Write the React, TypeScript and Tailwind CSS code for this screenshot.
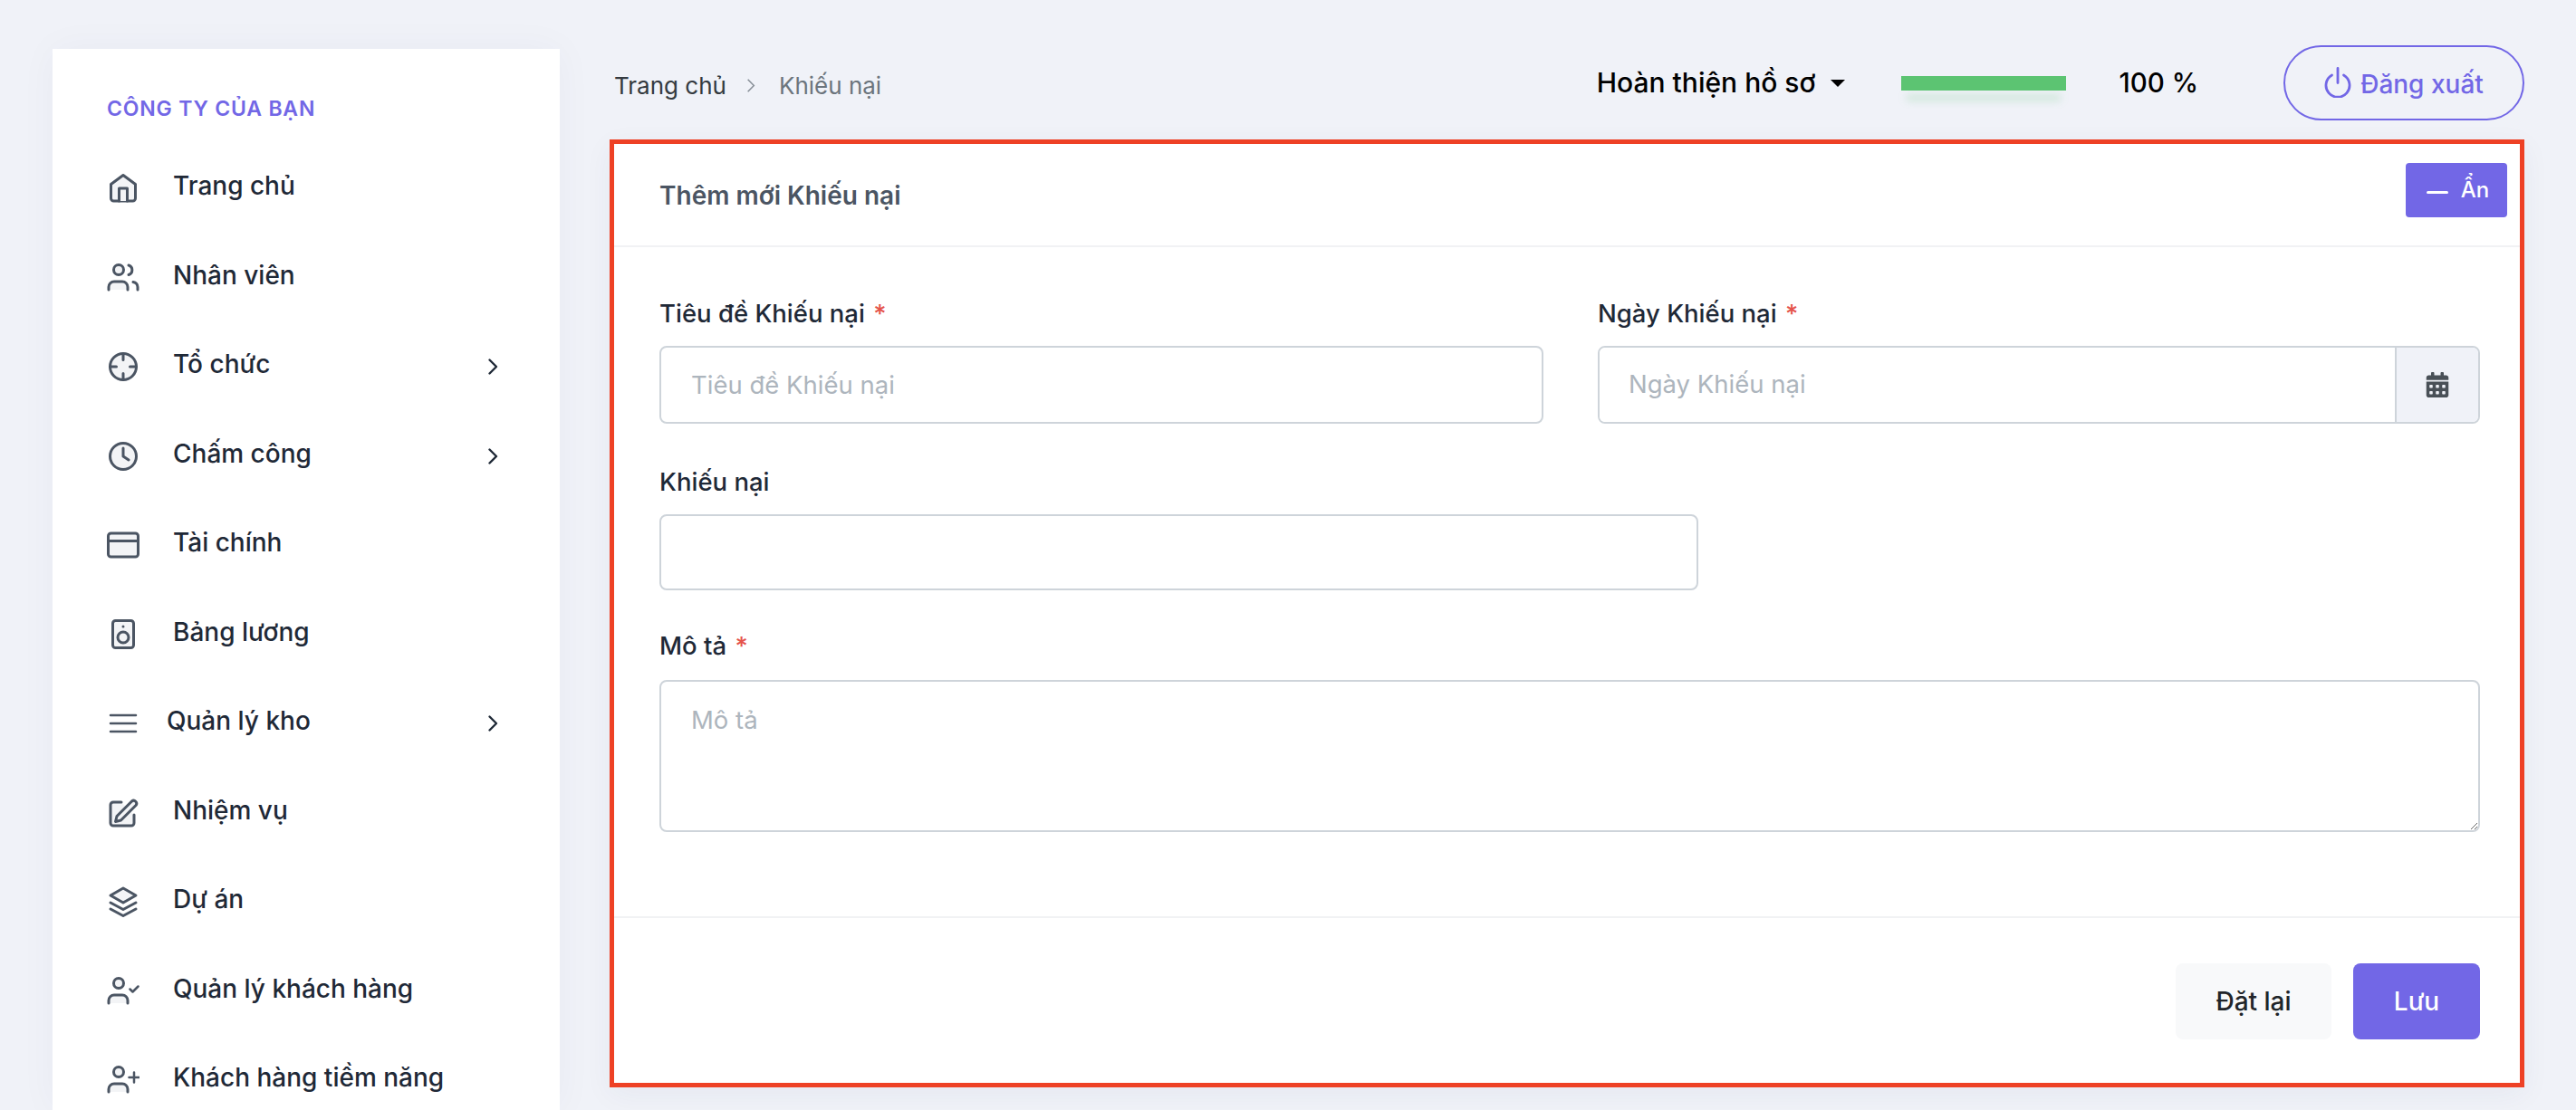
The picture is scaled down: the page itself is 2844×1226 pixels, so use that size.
import type { ReactNode } from 'react'
import { FaCalendarAlt } from 'react-icons/fa'

// Shared wrapper for the sidebar icons (drawn on a 36px grid)
function Ico({ children }: { children: ReactNode }) {
  return (
    <svg
      viewBox="0 0 36 36"
      className="w-[36px] h-[36px] shrink-0 mt-[6px] fill-[#f3f4f6] stroke-[#4b5563]"
      strokeWidth="3"
      strokeLinecap="round"
      strokeLinejoin="round"
    >
      {children}
    </svg>
  )
}

const UserBody = () => (
  <>
    <circle cx="13" cy="9" r="5.5" />
    <path d="M2 31v-3a6 6 0 0 1 6-6h9a6 6 0 0 1 6 6v3" />
  </>
)

const icons = {
  home: (
    <Ico>
      <path d="M18 3.5 31.5 13.5V29a3 3 0 0 1-3 3H7.5a3 3 0 0 1-3-3V13.5Z" />
      <path d="M13.5 32V18h9v14" />
    </Ico>
  ),
  users: (
    <Ico>
      <UserBody />
      <path d="M24 4a5.5 5.5 0 0 1 0 10.5" fill="none" />
      <path d="M29 22.5a6 6 0 0 1 5 5.5v3" fill="none" />
    </Ico>
  ),
  target: (
    <Ico>
      <circle cx="18" cy="18" r="14.5" />
      <path d="M18 3.5v7M18 25.5v7M3.5 18h7M25.5 18h7" />
    </Ico>
  ),
  clock: (
    <Ico>
      <circle cx="18" cy="18" r="14.5" />
      <path d="M18 9v9l6 4" fill="none" />
    </Ico>
  ),
  card: (
    <Ico>
      <rect x="1.5" y="5" width="33" height="26" rx="3" />
      <path d="M1.5 13.5h33" />
    </Ico>
  ),
  speaker: (
    <Ico>
      <rect x="6.5" y="2.5" width="23" height="30" rx="3" />
      <circle cx="18" cy="21" r="6" />
      <path d="M18 9h.01" />
    </Ico>
  ),
  menu: (
    <Ico>
      <path d="M4 9h28M4 18h28M4 27h28" strokeWidth="2.5" />
    </Ico>
  ),
  edit: (
    <Ico>
      <path d="M16 6H7a3 3 0 0 0-3 3v20a3 3 0 0 0 3 3h20a3 3 0 0 0 3-3v-9" />
      <path d="M27.5 5a3.2 3.2 0 0 1 4.5 4.5L15.5 26l-6 1.5 1.5-6Z" />
    </Ico>
  ),
  layers: (
    <Ico>
      <path d="M18 3 32 11 18 19 4 11Z" />
      <path d="M4 19l14 7.5L32 19M4 26l14 7.5L32 26" fill="none" />
    </Ico>
  ),
  userCheck: (
    <Ico>
      <UserBody />
      <path d="M25.5 15.5l3 3 6-6" fill="none" strokeWidth="2.5" />
    </Ico>
  ),
  userPlus: (
    <Ico>
      <UserBody />
      <path d="M30 9.5v11M24.5 15h11" fill="none" strokeWidth="2.5" />
    </Ico>
  ),
}

const menu = [
  { label: 'Trang chủ', icon: icons.home },
  { label: 'Nhân viên', icon: icons.users },
  { label: 'Tổ chức', icon: icons.target, sub: true },
  { label: 'Chấm công', icon: icons.clock, sub: true },
  { label: 'Tài chính', icon: icons.card },
  { label: 'Bảng lương', icon: icons.speaker },
  { label: 'Quản lý kho', icon: icons.menu, sub: true, tight: true },
  { label: 'Nhiệm vụ', icon: icons.edit },
  { label: 'Dự án', icon: icons.layers },
  { label: 'Quản lý khách hàng', icon: icons.userCheck },
  { label: 'Khách hàng tiềm năng', icon: icons.userPlus },
]

function Sidebar() {
  return (
    <aside className="w-[560px] shrink-0 mt-[54px] ml-[58px] h-[1172px] overflow-hidden bg-white shadow-[0_0_40px_rgba(40,50,90,0.04)]">
      <div className="pt-[52px] pl-[60px] h-[102px] text-[23px] leading-[28px] font-semibold tracking-[0.035em] text-[#7267e6]">
        CÔNG TY CỦA BẠN
      </div>
      {menu.map((m) => (
        <div key={m.label} className="flex items-center h-[98.5px] pl-[60px] pr-[68px] text-[28px] font-medium text-[#1f2937]">
          {m.icon}
          <span className={m.tight ? 'ml-[30px]' : 'ml-[37px]'}>{m.label}</span>
          {m.sub && (
            <svg viewBox="0 0 12 20" className="w-[12px] h-[20px] ml-auto mt-[6px] fill-none stroke-[#1f2937]" strokeWidth="2.4" strokeLinecap="round" strokeLinejoin="round">
              <path d="M2.5 2.5 10 10l-7.5 7.5" />
            </svg>
          )}
        </div>
      ))}
    </aside>
  )
}

function Header() {
  return (
    <div className="flex items-center h-[83px] mt-[50px] mb-[21px]">
      <div className="flex items-center mt-[5px] pl-[5px] text-[26px]">
        <span className="text-[#343a40]">Trang chủ</span>
        <svg viewBox="0 0 12 20" className="w-[10px] h-[17px] ml-[22px] mr-[26px] fill-none stroke-[#868e96]" strokeWidth="1.8">
          <path d="M2 2l8 8-8 8" />
        </svg>
        <span className="text-[#6c757d]">Khiếu nại</span>
      </div>
      <div className="flex items-center ml-auto">
        <span className="text-[30px] font-medium text-black">Hoàn thiện hồ sơ</span>
        <span className="ml-[16px] mr-[62px] w-0 h-0 border-x-[8px] border-x-transparent border-t-[8px] border-t-black" />
        <div className="w-[182px] h-[16px] bg-[#5cc472] shadow-[0_16px_10px_-6px_rgba(92,196,114,0.4)]" />
        <span className="ml-[59px] mr-[94px] text-[29.5px] font-medium text-black">100 %</span>
        <button className="flex items-center justify-center w-[266px] h-[83px] pt-[2px] rounded-full border-2 border-[#7267e6] text-[28px] font-medium text-[#7267e6]">
          <svg viewBox="0 0 30 34" className="w-[30px] h-[34px] mr-[10px] -mt-[4px] fill-none stroke-[#7267e6]" strokeWidth="2.8" strokeLinecap="round">
            <path d="M15 1.5v16M8.5 9a13 13 0 1 0 13 0" />
          </svg>
          Đăng xuất
        </button>
      </div>
    </div>
  )
}

function Label({ text, required }: { text: string; required?: boolean }) {
  return (
    <label className="block text-[27.5px] leading-[38px] font-medium text-[#1f2937]">
      {text}
      {required && <span className="ml-[2px] text-[#e5534b]"> *</span>}
    </label>
  )
}

const fieldCls =
  'block w-full border-2 border-[#ced4da] rounded-[8px] bg-white px-[33px] text-[27.5px] text-[#1f2937] outline-none placeholder:text-[#adb5bd]'

function Form() {
  return (
    <div className="border-[5px] border-[#ee4125] w-[2114px] h-[1047px] bg-white shadow-[0_8px_30px_rgba(40,50,90,0.05)]">
      {/* card header */}
      <div className="flex justify-between h-[114px] pl-[50px] pr-[14px] border-b-2 border-[#f1f2f4]">
        <span className="self-center pt-[2px] text-[28px] font-semibold text-[#4b5563]">Thêm mới Khiếu nại</span>
        <button className="flex items-center justify-center mt-[21px] w-[112px] h-[60px] pl-[3px] rounded-[4px] bg-[#7267e6] text-[24px] font-medium text-white">
          <span className="w-[24px] h-[3px] mt-[4px] mr-[14px] rounded-full bg-white" />
          Ẩn
        </button>
      </div>

      {/* card body */}
      <div className="h-[739px] pl-[50px] pr-[44px] pt-[54px]">
        <div className="grid grid-cols-[976px_974px] gap-x-[60px]">
          <div>
            <Label text="Tiêu đề Khiếu nại" required />
            <input placeholder="Tiêu đề Khiếu nại" className={`${fieldCls} h-[86px] mt-[17px]`} />
          </div>
          <div>
            <Label text="Ngày Khiếu nại" required />
            <div className="flex h-[86px] mt-[17px] border-2 border-[#ced4da] rounded-[8px] overflow-hidden">
              <input placeholder="Ngày Khiếu nại" className="flex-1 min-w-0 bg-white pl-[32px] pr-[33px] text-[27.5px] outline-none placeholder:text-[#adb5bd]" />
              <div className="flex items-center justify-center w-[92px] border-l-2 border-[#ced4da] bg-[#f0f2f8]">
                <FaCalendarAlt className="w-[28px] h-[28px] text-[#495057]" />
              </div>
            </div>
          </div>
        </div>
        <div className="mt-[45px] w-[1147px]">
          <Label text="Khiếu nại" />
          <input className={`${fieldCls} h-[84px] mt-[17px]`} />
        </div>
        <div className="mt-[42px]">
          <Label text="Mô tả" required />
          <textarea placeholder="Mô tả" className={`${fieldCls} h-[168px] mt-[19px] pt-[24px] leading-[36px]`} />
        </div>
      </div>

      {/* card footer */}
      <div className="flex justify-end gap-[24px] pr-[44px] pt-[50px] border-t-2 border-[#f1f2f4]">
        <button className="w-[172px] h-[84px] rounded-[8px] bg-[#f8f9fa] text-[28px] font-medium text-[#212529]">Đặt lại</button>
        <button className="w-[140px] h-[84px] rounded-[8px] bg-[#7267e6] text-[28px] font-medium text-white">Lưu</button>
      </div>
    </div>
  )
}

export default function App() {
  return (
    <div className="flex h-[1226px] overflow-hidden bg-[#f0f2f8] font-['Inter',sans-serif]">
      <Sidebar />
      <main className="ml-[55px]">
        <Header />
        <Form />
      </main>
    </div>
  )
}
